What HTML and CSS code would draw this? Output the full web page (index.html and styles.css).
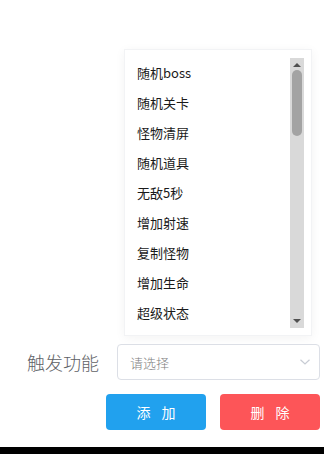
FILE: index.html
```html
<!DOCTYPE html>
<html lang="zh-CN">
<head>
    <meta charset="UTF-8">
    <meta name="viewport" content="width=device-width, initial-scale=1.0">
    <title>触发功能</title>
    <link rel="stylesheet" href="styles.css">
</head>
<body>

    <div class="page">
        <!-- Dropdown list -->
        <div class="dropdown">
            <div class="listbox">
                <ul class="options">
                    <li>随机boss</li>
                    <li>随机关卡</li>
                    <li>怪物清屏</li>
                    <li>随机道具</li>
                    <li>无敌5秒</li>
                    <li>增加射速</li>
                    <li>复制怪物</li>
                    <li>增加生命</li>
                    <li>超级状态</li>
                </ul>
                <div class="scrollbar">
                    <span class="arrow arrow-up"></span>
                    <span class="thumb"></span>
                    <span class="arrow arrow-down"></span>
                </div>
            </div>
        </div>

        <!-- Form -->
        <div class="form-row">
            <label class="form-label">触发功能</label>
            <div class="select">
                <span class="placeholder">请选择</span>
                <svg class="chevron" width="12" height="8" viewBox="0 0 12 8">
                    <path d="M1.5 1.8 L6 6 L10.5 1.8" fill="none" stroke="#c8ccd4" stroke-width="1.2"/>
                </svg>
            </div>
        </div>

        <div class="btn-row">
            <button class="btn btn-add">添 加</button>
            <button class="btn btn-del">删 除</button>
        </div>
    </div>

    <div class="bottom-bar"></div>

</body>
</html>
```

FILE: styles.css
```css
body {
    margin: 0;
    padding: 0;
    background: white;
    font-family: "Noto Sans CJK SC", "Noto Sans", sans-serif;
}

.page {
    height: 447px;
    overflow: hidden;
}

.dropdown {
    box-sizing: border-box;
    margin: 49px 0 0 124px;
    width: 188px;
    height: 287px;
    padding: 8px 7px 8px 1px;
    background: white;
    border: 1px solid #f2f3f5;
    box-shadow: 0 2px 10px rgba(0, 0, 0, 0.05);
}

.listbox {
    display: flex;
    height: 270px;
}

.options {
    flex: 1;
    list-style: none;
    margin: 0;
    padding: 0;
}

.options li {
    height: 30px;
    line-height: 30px;
    padding-left: 11px;
    font-size: 13px;
    color: #1a1a1a;
}

.scrollbar {
    width: 14px;
    background: #d9d9d9;
    display: flex;
    flex-direction: column;
    align-items: center;
}

.arrow {
    width: 0;
    height: 0;
    border-left: 4px solid transparent;
    border-right: 4px solid transparent;
}

.arrow-up {
    margin-top: 5px;
    border-bottom: 4px solid #505050;
}

.arrow-down {
    margin-top: auto;
    margin-bottom: 5px;
    border-top: 4px solid #505050;
}

.thumb {
    margin-top: 3px;
    width: 10px;
    height: 66px;
    border-radius: 5px;
    background: #a3a3a3;
}

.form-row {
    display: flex;
    align-items: center;
    margin-top: 8px;
}

.form-label {
    width: 72px;
    margin-left: 27px;
    margin-right: 18px;
    font-size: 18px;
    font-weight: 300;
    line-height: 36px;
    color: #606266;
}

.select {
    box-sizing: border-box;
    width: 203px;
    height: 36px;
    border: 1px solid #dcdfe6;
    border-radius: 4px;
    display: flex;
    align-items: center;
    justify-content: space-between;
    padding: 0 8px 0 12px;
}

.placeholder {
    font-size: 13px;
    font-weight: 300;
    color: #808080;
}

.btn-row {
    display: flex;
    justify-content: flex-end;
    gap: 14px;
    margin-top: 14px;
    padding-right: 4px;
}

.btn {
    width: 100px;
    height: 36px;
    border: none;
    border-radius: 4px;
    color: white;
    font-family: inherit;
    font-size: 14px;
    letter-spacing: 4px;
    padding: 0 0 0 4px;
    cursor: pointer;
}

.btn-add {
    background-color: #21a1ee;
}

.btn-del {
    background-color: #fd5558;
}

.bottom-bar {
    height: 7px;
    background: black;
}
```
